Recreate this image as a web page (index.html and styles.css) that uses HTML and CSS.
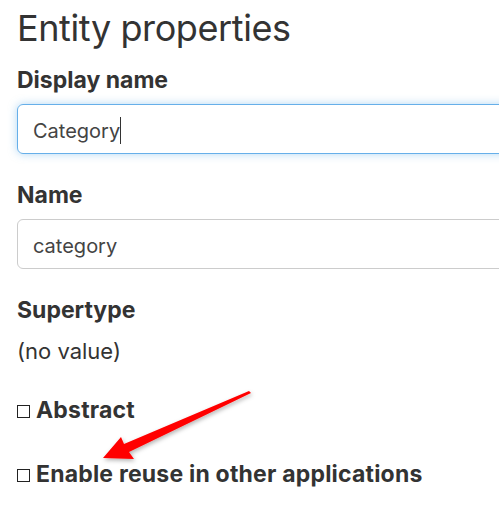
FILE: index.html
```html
<!DOCTYPE html>
<html>
<head>
<meta charset="utf-8">
<link rel="stylesheet" href="styles.css">
</head>
<body>
<div class="page">
  <h1 class="title">Entity properties</h1>
  <div class="field">
    <label class="label">Display name</label>
    <div class="input focused">Category<span class="caret"></span></div>
  </div>
  <div class="field">
    <label class="label">Name</label>
    <div class="input">category</div>
  </div>
  <div class="field last">
    <label class="label">Supertype</label>
    <div class="value">(no value)</div>
  </div>
  <div class="checks">
    <div class="check"><span class="box"></span>Abstract</div>
    <div class="check"><span class="box"></span>Enable reuse in other applications</div>
  </div>
</div>
<svg class="arrow" width="499" height="518" viewBox="0 0 499 518">
  <defs>
    <filter id="sh" x="-20%" y="-20%" width="140%" height="140%">
      <feDropShadow dx="1" dy="2" stdDeviation="2" flood-color="#000" flood-opacity="0.3"/>
    </filter>
  </defs>
  <polygon filter="url(#sh)" fill="#ff0000" points="103,458 121,437 124,444 249,391 251,393 129,452 134,459"/>
</svg>
</body>
</html>
```
FILE: styles.css
```css
html, body {
  margin: 0;
  padding: 0;
  background: #fff;
  overflow: hidden;
}
body {
  width: 499px;
  height: 518px;
  position: relative;
  font-family: Inter, "Liberation Sans", sans-serif;
  color: #333;
}
.page {
  padding: 6px 0 0 17px;
  width: 600px;
}
.title {
  margin: 0 0 16px;
  font-size: 36px;
  font-weight: 400;
  line-height: 44px;
  letter-spacing: -0.4px;
}
.field {
  margin-bottom: 27px;
}
.field.last {
  margin-bottom: 0;
}
.label {
  display: block;
  font-size: 23px;
  font-weight: 700;
  line-height: 28px;
  margin-bottom: 10px;
}
.input {
  box-sizing: border-box;
  width: 600px;
  height: 50px;
  border: 1px solid #ccc;
  border-radius: 6px;
  padding: 0 15px;
  font-size: 20px;
  line-height: 52px;
  color: #444;
}
.input.focused {
  border-color: #66afe9;
  box-shadow: 0 0 8px rgba(102, 175, 233, 0.5);
}
.caret {
  display: inline-block;
  width: 1px;
  height: 27px;
  background: #333;
  vertical-align: -6px;
}
.value {
  font-size: 22px;
  line-height: 28px;
  margin-top: 13px;
}
.checks {
  padding-top: 31px;
  display: flex;
  flex-direction: column;
  gap: 36px;
}
.check {
  display: flex;
  align-items: baseline;
  font-size: 23px;
  font-weight: 700;
  line-height: 28px;
  letter-spacing: 0.2px;
}
.box {
  box-sizing: border-box;
  display: inline-block;
  width: 13px;
  height: 13px;
  border: 1px solid #222;
  margin-right: 6px;
  margin-bottom: 1px;
}
.arrow {
  position: absolute;
  left: 0;
  top: 0;
}
```
